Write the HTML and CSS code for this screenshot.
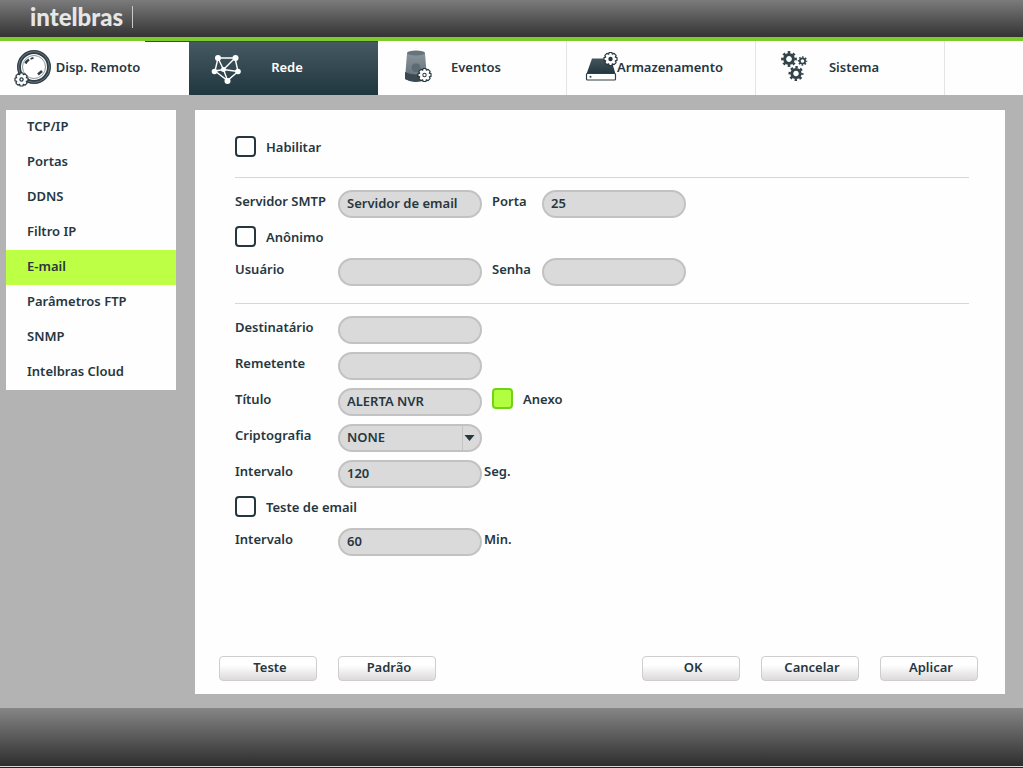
FILE: index.html
```html
<!DOCTYPE html>
<html lang="pt-BR">
<head>
<meta charset="utf-8">
<meta name="viewport" content="width=device-width, initial-scale=1">
<title>Intelbras - Rede</title>
<link rel="stylesheet" href="styles.css">
</head>
<body>
<svg class="defs" aria-hidden="true">
  <defs>
    <linearGradient id="beacon" x1="0" y1="0" x2="0" y2="1">
      <stop offset="0" stop-color="#8b959b"/><stop offset="1" stop-color="#5d6b73"/>
    </linearGradient>
    <linearGradient id="drive" x1="0" y1="0" x2="0" y2="1">
      <stop offset="0" stop-color="#45555e"/><stop offset="1" stop-color="#22353e"/>
    </linearGradient>
    <g id="gear-light">
      <path d="M-1.400-6.500H1.400L1.800-4.800L3.600-5.600L5.600-3.600L4.800-1.800L6.500-1.400V1.400L4.800 1.800L5.600 3.600L3.600 5.600L1.800 4.800L1.400 6.500H-1.400L-1.800 4.800L-3.600 5.600L-5.600 3.600L-4.800 1.800L-6.500 1.400V-1.400L-4.800-1.800L-5.600-3.600L-3.600-5.600L-1.800-4.800Z" fill="#fff" stroke="#26373f" stroke-width="1.200" stroke-linejoin="round"/>
      <circle r="2.200" fill="#26373f"/>
    </g>
    <g id="gear-dark">
      <circle r="4.400" fill="none" stroke="#33434b" stroke-width="3"/>
      <circle r="6.600" fill="none" stroke="#33434b" stroke-width="2.600" pathLength="16" stroke-dasharray="1 1" stroke-dashoffset=".5"/>
    </g>
  </defs>
</svg>

<header class="topbar">
  <span class="logo">intelbras</span>
</header>

<nav class="tabs" aria-label="Principal">
  <a class="tab tab-remote" href="#">
    <svg class="tab-icon" viewBox="0 0 55 54" aria-hidden="true">
      <circle cx="34" cy="26" r="15" fill="#fff" stroke="#303e47" stroke-width="4"/>
      <circle cx="34" cy="26" r="15.400" fill="none" stroke="#68757d" stroke-width="1"/>
      <circle cx="34" cy="26" r="11.500" fill="none" stroke="#8c969b" stroke-width="1"/>
      <path d="M25.500 22.500q1-2.500 3.500-4" fill="none" stroke="#303e47" stroke-width="2.500"/>
      <path d="M30.500 17.800l3-.9" stroke="#303e47" stroke-width="1.800"/>
      <path d="M38 33.500l4-3.500" stroke="#303e47" stroke-width="2.500"/>
      <use href="#gear-light" x="21.500" y="38.500"/>
      <circle cx="21.500" cy="38.500" r="1" fill="#fff"/>
    </svg>
    <span class="tab-label">Disp. Remoto</span>
  </a>
  <a class="tab tab-active" href="#" aria-current="page">
    <svg class="tab-icon" viewBox="0 0 55 54" aria-hidden="true">
      <g stroke="#fff" stroke-width="1.400" fill="none">
        <path d="M29 17H46L49 30.500L38.500 39.500L26 30L29 17L34.500 28.500L46 17M26 30L34.500 28.500L49 30.500M34.500 28.500L38.500 39.500"/>
      </g>
      <g fill="#fff">
        <circle cx="29" cy="17" r="3"/><circle cx="46.500" cy="17" r="3"/>
        <circle cx="49" cy="30.500" r="2.800"/><circle cx="38.500" cy="40" r="3"/>
        <circle cx="25.500" cy="30.500" r="2.800"/><circle cx="34.500" cy="28.500" r="2.500"/>
      </g>
    </svg>
    <span class="tab-label">Rede</span>
  </a>
  <a class="tab" href="#">
    <svg class="tab-icon" viewBox="0 0 55 54" aria-hidden="true">
      <path d="M29 12L27 38Q37 44 49 38L47 12Z" fill="url(#beacon)"/>
      <ellipse cx="38" cy="12" rx="9" ry="2.500" fill="#66737b"/>
      <circle cx="38" cy="27" r="5" fill="#5d6a72" stroke="#75828a"/>
      <path d="M27 31Q38 36 49 31V38Q38 44 27 38Z" fill="#3b4952"/>
      <use href="#gear-light" x="46.500" y="34"/>
      <circle cx="46.500" cy="34" r="1.200" fill="#fff"/>
    </svg>
    <span class="tab-label">Eventos</span>
  </a>
  <a class="tab tab-storage" href="#">
    <svg class="tab-icon" viewBox="0 0 55 54" aria-hidden="true">
      <path d="M25 17.500H44L48.500 33H19.500Z" fill="url(#drive)"/>
      <rect x="19.500" y="32.500" width="29" height="6.500" rx="1" fill="#fff" stroke="#303e47" stroke-width="1.200"/>
      <circle cx="23.500" cy="35.700" r="1" fill="#303e47"/>
      <use href="#gear-light" x="43.500" y="18"/>
    </svg>
    <span class="tab-label">Armazenamento</span>
  </a>
  <a class="tab" href="#">
    <svg class="tab-icon" viewBox="0 0 55 54" aria-hidden="true">
      <use href="#gear-dark" transform="translate(33 18)"/>
      <use href="#gear-dark" transform="translate(46.500 20) scale(.6)"/>
      <use href="#gear-dark" transform="translate(40 32.500) scale(.95)"/>
    </svg>
    <span class="tab-label">Sistema</span>
  </a>
</nav>

<main class="content">
  <nav class="sidebar" aria-label="Rede">
    <a class="side-item" href="#">TCP/IP</a>
    <a class="side-item" href="#">Portas</a>
    <a class="side-item" href="#">DDNS</a>
    <a class="side-item" href="#">Filtro IP</a>
    <a class="side-item side-active" href="#" aria-current="page">E-mail</a>
    <a class="side-item" href="#">Parâmetros FTP</a>
    <a class="side-item" href="#">SNMP</a>
    <a class="side-item" href="#">Intelbras Cloud</a>
  </nav>

  <form class="panel">
    <div class="fields">
      <label class="check"><input type="checkbox">Habilitar</label>
      <hr class="rule">
      <div class="row">
        <label class="label" for="smtp">Servidor SMTP</label>
        <input class="field" id="smtp" type="text" value="Servidor de email">
        <label class="label label-second" for="port">Porta</label>
        <input class="field" id="port" type="text" value="25">
      </div>
      <label class="check"><input type="checkbox">Anônimo</label>
      <div class="row">
        <label class="label" for="user">Usuário</label>
        <input class="field" id="user" type="text">
        <label class="label label-second" for="pass">Senha</label>
        <input class="field" id="pass" type="password">
      </div>
      <hr class="rule">
      <div class="row">
        <label class="label" for="to">Destinatário</label>
        <input class="field" id="to" type="text">
      </div>
      <div class="row">
        <label class="label" for="from">Remetente</label>
        <input class="field" id="from" type="text">
      </div>
      <div class="row">
        <label class="label" for="subject">Título</label>
        <input class="field" id="subject" type="text" value="ALERTA NVR">
        <label class="check check-inline"><input type="checkbox" checked>Anexo</label>
      </div>
      <div class="row">
        <label class="label" for="crypto">Criptografia</label>
        <span class="select">
          <select class="field" id="crypto"><option>NONE</option><option>SSL</option><option>TLS</option></select>
          <svg class="arrow" viewBox="0 0 20 24" aria-hidden="true"><path d="M.5 0V24" stroke="#c4c4c4"/><path d="M2.500 9H12.500L7.500 15Z" fill="#26373f"/></svg>
        </span>
      </div>
      <div class="row">
        <label class="label" for="interval">Intervalo</label>
        <input class="field" id="interval" type="text" value="120">
        <span class="unit">Seg.</span>
      </div>
      <label class="check"><input type="checkbox">Teste de email</label>
      <div class="row">
        <label class="label" for="test-interval">Intervalo</label>
        <input class="field" id="test-interval" type="text" value="60">
        <span class="unit">Min.</span>
      </div>
    </div>
    <div class="actions">
      <button class="button" type="button">Teste</button>
      <button class="button" type="button">Padrão</button>
      <button class="button button-first-right" type="button">OK</button>
      <button class="button" type="button">Cancelar</button>
      <button class="button" type="button">Aplicar</button>
    </div>
  </form>
</main>

<footer class="footer"></footer>
</body>
</html>
```
FILE: styles.css
```css
* { box-sizing: border-box; }

body {
  margin: 0;
  min-height: 100vh;
  display: flex;
  flex-direction: column;
  background: #b3b3b3;
  color: #26373f;
  font: 600 13px/22px "Noto Sans", "DejaVu Sans", sans-serif;
}

a { color: inherit; text-decoration: none; }
.defs { position: absolute; width: 0; height: 0; }

.topbar {
  height: 41px;
  display: flex;
  align-items: flex-start;
  padding: 6px 0 0 30px;
  background: linear-gradient(#7b7b7b, #333);
  border-bottom: 4px solid #7ecb2c;
}
.logo {
  padding-right: 9px;
  border-right: 1px solid #c8c8c8;
  color: #e6e6e6;
  font: 900 24px/22px Lato, sans-serif;
}

.tabs { display: flex; background: #fefefe; }
.tab {
  position: relative;
  flex: 0 1 189px;
  height: 54px;
  display: flex;
  align-items: center;
  border-right: 1px solid #e4e4e4;
}
.tab-icon { flex: none; width: 55px; height: 54px; }
.tab-label { min-width: 86px; padding-bottom: 2px; text-align: center; }
.tab-storage .tab-label { margin-left: -5px; }
.tab-remote { border-right: 0; }
.tab-remote::after {
  content: "";
  position: absolute;
  top: 0;
  right: 0;
  width: 44px;
  height: 1px;
  background: #35521f;
}
.tab-active {
  border-right: 0;
  background: linear-gradient(#35521f 1px, #465962 1px, #203740);
  color: #fff;
}

.content {
  flex: 1;
  display: flex;
  gap: 19px;
  padding: 15px 18px 14px 6px;
}
.sidebar { flex: none; width: 170px; align-self: flex-start; background: #fefefe; }
.side-item { display: block; padding-left: 21px; line-height: 33px; padding-bottom: 2px; }
.side-active { background: #bdff44; }

.panel {
  flex: 1;
  display: flex;
  flex-direction: column;
  justify-content: space-between;
  padding: 26px 27px 13px 24px;
  background: #fefefe;
}
.fields {
  display: flex;
  flex-direction: column;
  gap: 8px;
  padding: 0 9px 0 16px;
}
.rule { width: 100%; margin: 9px 0 4px; border: 0; border-top: 1px solid #d6d6d6; }
.row { display: flex; align-items: flex-start; }
.label { width: 103px; }
.label-second { width: 50px; margin-left: 10px; }
.unit { margin-left: 2px; }

.field {
  width: 144px;
  height: 28px;
  margin: 0;
  padding: 0 7px 2px;
  border: 2px solid #c2c2c2;
  border-radius: 14px;
  background: #dadada;
  color: inherit;
  font: inherit;
  appearance: none;
}
.select { position: relative; display: flex; }
.arrow {
  position: absolute;
  top: 2px;
  right: 0;
  width: 20px;
  height: 24px;
  pointer-events: none;
}

.check { height: 24px; display: flex; gap: 10px; align-self: flex-start; }
.check input {
  width: 21px;
  height: 21px;
  margin: 0;
  border: 2px solid #26373f;
  border-radius: 4px;
  background: #fefefe;
  appearance: none;
}
.check input:checked { border-color: #70d414; background: #b2ff42; }
.check-inline { margin-left: 10px; }

.actions { display: flex; gap: 21px; }
.button {
  width: 98px;
  height: 25px;
  padding: 0 0 3px 4px;
  border: 1px solid #cfcdce;
  border-radius: 4px;
  background: linear-gradient(#fff 35%, #dcdadb);
  color: inherit;
  font: inherit;
  line-height: 20px;
}
.button-first-right { margin-left: auto; }

.footer {
  height: 60px;
  background: linear-gradient(#868686, #2c2c2c);
  border-bottom: 1px solid #222;
  box-shadow: inset 0 -1px #d8d8d8;
}
```
